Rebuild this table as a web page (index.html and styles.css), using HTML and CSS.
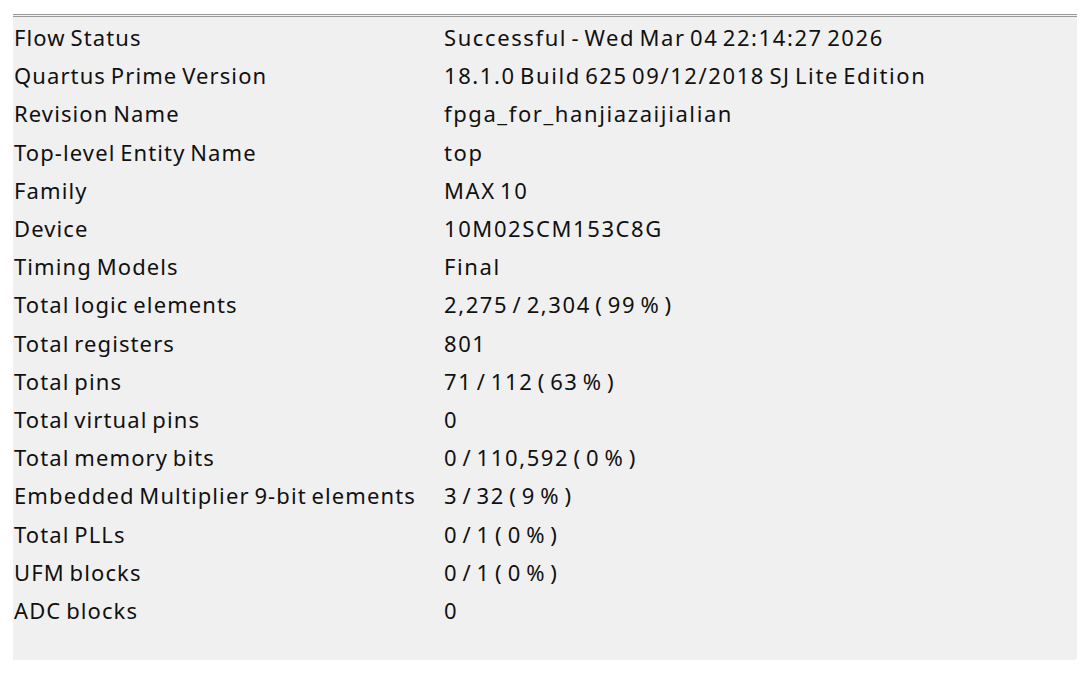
FILE: index.html
```html
<!DOCTYPE html>
<html>
<head>
<meta charset="utf-8">
<link rel="stylesheet" href="styles.css">
</head>
<body>
<div class="panel">
  <div class="row"><span class="k">Flow Status</span><span class="v">Successful - Wed Mar 04 22:14:27 2026</span></div>
  <div class="row"><span class="k">Quartus Prime Version</span><span class="v">18.1.0 Build 625 09/12/2018 SJ Lite Edition</span></div>
  <div class="row"><span class="k">Revision Name</span><span class="v">fpga_for_hanjiazaijialian</span></div>
  <div class="row"><span class="k">Top-level Entity Name</span><span class="v">top</span></div>
  <div class="row"><span class="k">Family</span><span class="v">MAX 10</span></div>
  <div class="row"><span class="k">Device</span><span class="v">10M02SCM153C8G</span></div>
  <div class="row"><span class="k">Timing Models</span><span class="v">Final</span></div>
  <div class="row"><span class="k">Total logic elements</span><span class="v">2,275 / 2,304 ( 99 % )</span></div>
  <div class="row"><span class="k">Total registers</span><span class="v">801</span></div>
  <div class="row"><span class="k">Total pins</span><span class="v">71 / 112 ( 63 % )</span></div>
  <div class="row"><span class="k">Total virtual pins</span><span class="v">0</span></div>
  <div class="row"><span class="k">Total memory bits</span><span class="v">0 / 110,592 ( 0 % )</span></div>
  <div class="row"><span class="k">Embedded Multiplier 9-bit elements</span><span class="v">3 / 32 ( 9 % )</span></div>
  <div class="row"><span class="k">Total PLLs</span><span class="v">0 / 1 ( 0 % )</span></div>
  <div class="row"><span class="k">UFM blocks</span><span class="v">0 / 1 ( 0 % )</span></div>
  <div class="row"><span class="k">ADC blocks</span><span class="v">0</span></div>
</div>
</body>
</html>
```
FILE: styles.css
```css
html, body {
  margin: 0;
  padding: 0;
  background: #ffffff;
}
body {
  padding: 14px 12px 0 13px;
  font-family: "Noto Sans", "Open Sans", sans-serif;
  font-size: 22px;
  word-spacing: -2px;
  color: #111111;
}
.panel {
  background: #f0f0f0;
  border-top: 3px double #9a9a9a;
  border-bottom-right-radius: 3px;
  height: 646px;
  box-sizing: border-box;
  padding-top: 1px;
}
.row {
  display: grid;
  grid-template-columns: 431px 1fr;
  height: 38.2px;
  align-items: center;
  white-space: nowrap;
}
.k {
  padding-left: 1px;
  letter-spacing: 1.1px;
}
.v {
  letter-spacing: 1.6px;
  word-spacing: -3px;
}
```
